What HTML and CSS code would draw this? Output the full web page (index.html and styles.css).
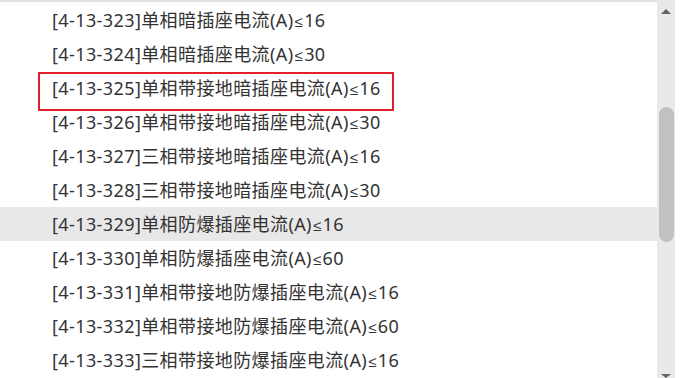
FILE: index.html
```html
<!DOCTYPE html>
<html lang="zh-CN">

<head>
    <meta charset="UTF-8">
    <meta name="viewport" content="width=device-width, initial-scale=1.0">
    <title>定额列表</title>

    <link rel="stylesheet" href="styles.css">

</head>

<body>

    <div class="panel">
        <ul class="quota_list">
            <li class="item">[4-13-323]单相暗插座电流(A)<span class="le">≤</span>16</li>
            <li class="item">[4-13-324]单相暗插座电流(A)<span class="le">≤</span>30</li>
            <li class="item marked">[4-13-325]单相带接地暗插座电流(A)<span class="le">≤</span>16<span class="mark_box"></span></li>
            <li class="item">[4-13-326]单相带接地暗插座电流(A)<span class="le">≤</span>30</li>
            <li class="item">[4-13-327]三相带接地暗插座电流(A)<span class="le">≤</span>16</li>
            <li class="item">[4-13-328]三相带接地暗插座电流(A)<span class="le">≤</span>30</li>
            <li class="item hover">[4-13-329]单相防爆插座电流(A)<span class="le">≤</span>16</li>
            <li class="item">[4-13-330]单相防爆插座电流(A)<span class="le">≤</span>60</li>
            <li class="item">[4-13-331]单相带接地防爆插座电流(A)<span class="le">≤</span>16</li>
            <li class="item">[4-13-332]单相带接地防爆插座电流(A)<span class="le">≤</span>60</li>
            <li class="item">[4-13-333]三相带接地防爆插座电流(A)<span class="le">≤</span>16</li>
        </ul>

        <!-- fake scrollbar -->
        <div class="scroll_track">
            <span class="arrow_up"></span>
            <span class="thumb"></span>
            <span class="arrow_down"></span>
        </div>
        <div class="gutter"></div>
    </div>

</body>

</html>
```

FILE: styles.css
```css
* {
    font-family: 'Noto Sans', 'Noto Sans CJK SC', sans-serif;
    box-sizing: border-box;
}

body {
    margin: 0;
    background-color: white;
}

.panel {
    display: flex;
    width: 689px;
    height: 378px;
    overflow: hidden;
}

.quota_list {
    list-style: none;
    margin: 0;
    padding: 1px 0 0 0;
    width: 657px;
    border-top: 2px solid #e3e3e3;
}

.item {
    position: relative;
    height: 34px;
    line-height: 34px;
    padding-left: 52px;
    font-size: 18px;
    letter-spacing: 0.4px;
    color: #333;
    white-space: nowrap;
}

/* small less-or-equal sign, the CJK one is full width */
.le {
    font-family: 'Liberation Sans', sans-serif;
    font-size: 15px;
    margin: 0 1px;
}

.hover {
    background-color: #e8e8e8;
}

/* red annotation box */
.mark_box {
    position: absolute;
    top: 1px;
    left: 38px;
    width: 356px;
    height: 39px;
    border: 2px solid #e0212b;
}

.scroll_track {
    width: 18px;
    background-color: #e9e9e9;
    display: flex;
    flex-direction: column;
    align-items: center;
    padding-top: 9px;
}

.arrow_up {
    width: 0;
    height: 0;
    border-left: 5px solid transparent;
    border-right: 5px solid transparent;
    border-bottom: 5px solid #626262;
}

.thumb {
    margin-top: 93px;
    width: 15px;
    height: 135px;
    border-radius: 8px;
    background-color: #c1c1c1;
}

.arrow_down {
    margin-top: auto;
    margin-bottom: 0;
    width: 0;
    height: 0;
    border-left: 5px solid transparent;
    border-right: 5px solid transparent;
    border-top: 4px solid #626262;
}

.gutter {
    width: 14px;
}
```
